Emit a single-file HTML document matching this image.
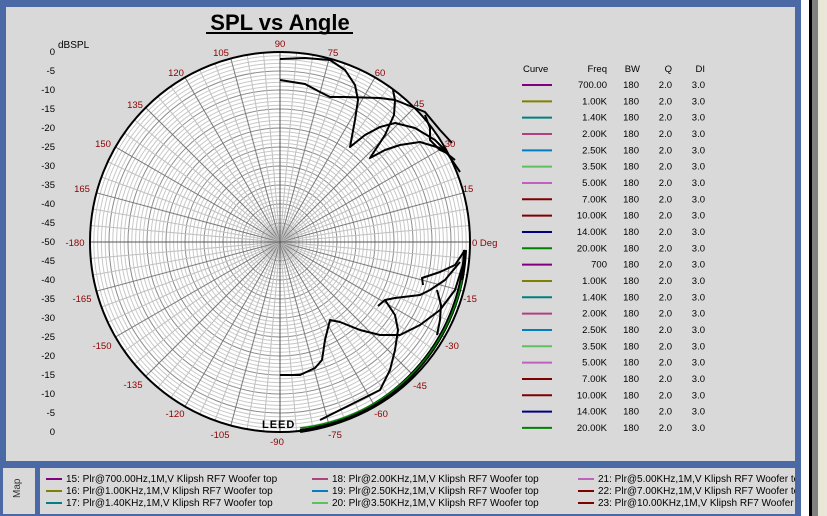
<!DOCTYPE html>
<html><head><meta charset="utf-8"><style>
html,body{margin:0;padding:0;width:827px;height:516px;overflow:hidden;background:#4a69a5;font-family:"Liberation Sans",sans-serif}
#main{position:absolute;left:6px;top:7px;width:789px;height:454px;background:#d9d9d9}
#map{position:absolute;left:3px;top:468px;width:32px;height:46px;background:#d9d9d9}
#leg{position:absolute;left:40px;top:468px;width:755px;height:46px;background:#d9d9d9;overflow:hidden}
.r1{position:absolute;left:801px;top:0;width:8px;height:516px;background:#fff}
.r2{position:absolute;left:809px;top:0;width:3px;height:516px;background:#000}
.r3{position:absolute;left:812px;top:0;width:6px;height:516px;background:#808080}
.r4{position:absolute;left:818px;top:0;width:9px;height:516px;background:#ebe7d8}
.li{position:absolute;font-size:10px;white-space:nowrap;color:#000;line-height:12px}
.li i{display:inline-block;width:16px;height:2px;vertical-align:middle;margin-right:4px}
</style></head><body>
<div class="r1"></div><div class="r2"></div><div class="r3"></div><div class="r4"></div>
<div id="main"></div>
<div id="map"><div style="position:absolute;left:9px;top:30px;transform:rotate(-90deg);transform-origin:0 0;font-size:10px;color:#333">Map</div></div>
<div id="leg">
<div class="li" style="left:6px;top:6px"><i style="background:#800080"></i>15: Plr@700.00Hz,1M,V Klipsh RF7 Woofer top</div>
<div class="li" style="left:6px;top:18px"><i style="background:#808000"></i>16: Plr@1.00KHz,1M,V Klipsh RF7 Woofer top</div>
<div class="li" style="left:6px;top:30px"><i style="background:#008080"></i>17: Plr@1.40KHz,1M,V Klipsh RF7 Woofer top</div>
<div class="li" style="left:272px;top:6px"><i style="background:#b04080"></i>18: Plr@2.00KHz,1M,V Klipsh RF7 Woofer top</div>
<div class="li" style="left:272px;top:18px"><i style="background:#0080c0"></i>19: Plr@2.50KHz,1M,V Klipsh RF7 Woofer top</div>
<div class="li" style="left:272px;top:30px"><i style="background:#60c060"></i>20: Plr@3.50KHz,1M,V Klipsh RF7 Woofer top</div>
<div class="li" style="left:538px;top:6px"><i style="background:#c060c0"></i>21: Plr@5.00KHz,1M,V Klipsh RF7 Woofer top</div>
<div class="li" style="left:538px;top:18px"><i style="background:#800000"></i>22: Plr@7.00KHz,1M,V Klipsh RF7 Woofer top</div>
<div class="li" style="left:538px;top:30px"><i style="background:#800000"></i>23: Plr@10.00KHz,1M,V Klipsh RF7 Woofer top</div>
</div>
<svg width="827" height="516" style="position:absolute;left:0;top:0" xmlns="http://www.w3.org/2000/svg" font-family="Liberation Sans, sans-serif">
<text x="280" y="30" font-size="22" font-weight="bold" text-anchor="middle">SPL vs Angle</text>
<line x1="206" y1="33" x2="353" y2="33" stroke="#000" stroke-width="2"/>
<text x="58" y="48" font-size="10">dBSPL</text>
<g id="dbl" font-size="9.5" text-anchor="end"></g>
<circle cx="280" cy="242" r="190" fill="#fff"/>
<g id="grid" fill="none"></g>
<g id="ang" font-size="9.5" fill="#8b0000" text-anchor="middle"></g>
<g fill="none" stroke="#000" stroke-width="2" stroke-linejoin="round">
<path d="M280,59 L305,58 L330,60"/>
<path d="M280,80 L305,84 L320,92 L330,97 L345,97 L380,98 L395,100 L410,106 L425,112 L440,130 L452,143"/>
<path d="M330,60 L345,70 L355,85 L358,100 L355,120 L350,147 L365,135 L380,127 L395,123 L415,128 L435,140 L445,150 L460,172"/>
<path d="M393,90 L395,100 L394,115 L385,135 L370,158 L385,150 L400,145 L420,142 L440,148 L455,160"/>
<path d="M425,115 L430,128 L430,140 L440,150 L447,153"/>
<path d="M280,375 L300,375 L315,368 L322,360 L325,340 L330,320 L340,322 L360,330 L380,335 L400,335 L420,325 L440,310 L455,290 L465,258"/>
<path d="M378,306 L385,300 L395,298 L420,295 L430,290 L445,280 L460,262"/>
<path d="M423,285 L422,278 L440,272 L455,265 L465,250"/>
<path d="M385,300 L395,315 L398,330 L395,350 L390,370 L380,390 L360,400 L340,410 L320,420"/>
<path d="M437,290 L441,305 L440,320 L437,335"/>
</g>
<path d="M465,250 A190,190 0 0 1 300,431" fill="none" stroke="#000" stroke-width="4"/>
<path d="M462,280 A186,186 0 0 1 300,428" fill="none" stroke="#008000" stroke-width="1.5"/>
<circle cx="280" cy="242" r="190" fill="none" stroke="#000" stroke-width="2"/>
<text x="262" y="428" font-size="11" font-weight="bold" letter-spacing="1">LEED</text>
<g font-size="9.5">
<text x="523" y="72">Curve</text>
<text x="607" y="72" text-anchor="end">Freq</text>
<text x="640" y="72" text-anchor="end">BW</text>
<text x="672" y="72" text-anchor="end">Q</text>
<text x="705" y="72" text-anchor="end">DI</text>
</g>
<g id="tbl" font-size="9.5"></g>
</svg>
<script>
var NS="http://www.w3.org/2000/svg";
function el(p,t,a,txt){var e=document.createElementNS(NS,t);for(var k in a)e.setAttribute(k,a[k]);if(txt!=null)e.textContent=txt;p.appendChild(e);return e;}
var g=document.getElementById('grid'),cx=280,cy=242,R=190;
for(var i=1;i<=50;i++){var r=R*i/50;el(g,'circle',{cx:cx,cy:cy,r:r,stroke:i%5?'#c8c8c8':'#8c8c8c','stroke-width':1});}
for(var a=0;a<360;a+=5){var t=a*Math.PI/180;el(g,'line',{x1:cx,y1:cy,x2:cx+R*Math.cos(t),y2:cy-R*Math.sin(t),stroke:a%15?'#c0c0c0':'#7a7a7a','stroke-width':1});}
el(g,'line',{x1:cx-R,y1:cy,x2:cx+R,y2:cy,stroke:'#555'});el(g,'line',{x1:cx,y1:cy-R,x2:cx,y2:cy+R,stroke:'#555'});
var an=document.getElementById('ang');
var L=[['90',280,43],['75',333,52],['60',380,72],['45',419,103],['30',450,143],['15',468,188],['-15',470,298],['-30',452,345],['-45',420,385],['-60',381,413],['-75',335,434],['-90',277,441],['-105',220,434],['-120',175,413],['-135',133,384],['-150',102,345],['-165',82,298],['-180',75,242],['165',82,188],['150',103,143],['135',135,104],['120',176,72],['105',221,52]];
L.forEach(function(l){el(an,'text',{x:l[1],y:l[2]+4},l[0]);});
el(an,'text',{x:472,y:246,'text-anchor':'start'},'0 Deg');
var d=document.getElementById('dbl');
for(var i=0;i<=20;i++){var v=i<=10?-5*i:-5*(20-i);el(d,'text',{x:55,y:55+19*i},''+v);}
var cols=['#800080','#808000','#008080','#b04080','#0080c0','#60c060','#c060c0','#800000','#800000','#000080','#008000'];
var fr=['700.00','1.00K','1.40K','2.00K','2.50K','3.50K','5.00K','7.00K','10.00K','14.00K','20.00K'];
var tb=document.getElementById('tbl');
for(var i=0;i<22;i++){var y=85+16.33*i,j=i%11;
el(tb,'line',{x1:522,y1:y,x2:552,y2:y,stroke:cols[j],'stroke-width':2});
el(tb,'text',{x:607,y:y+3,'text-anchor':'end'},i==11?'700':fr[j]);
el(tb,'text',{x:639,y:y+3,'text-anchor':'end'},'180');
el(tb,'text',{x:672,y:y+3,'text-anchor':'end'},'2.0');
el(tb,'text',{x:705,y:y+3,'text-anchor':'end'},'3.0');}
</script>
</body></html>
